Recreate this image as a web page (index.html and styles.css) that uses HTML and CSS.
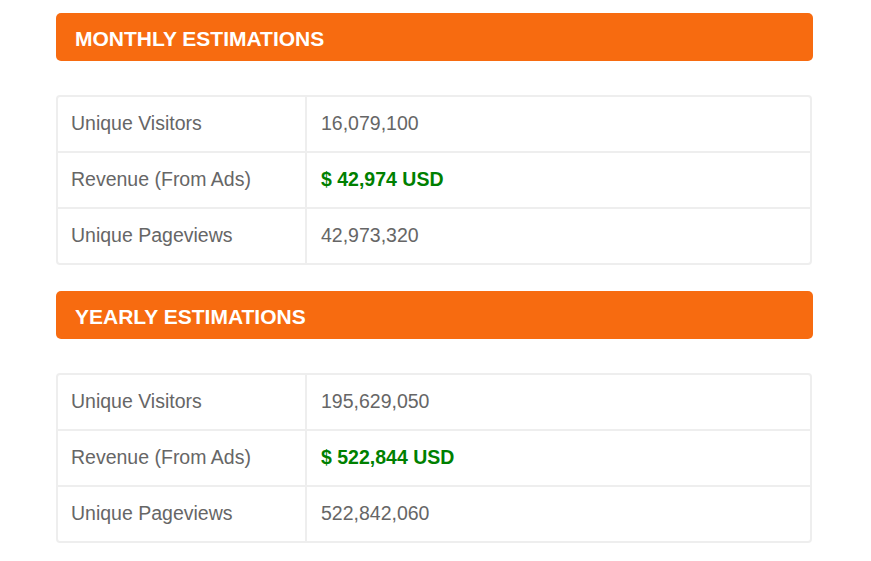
FILE: index.html
```html
<!DOCTYPE html>
<html>
<head>
<meta charset="utf-8">
<link rel="stylesheet" href="styles.css">
</head>
<body>
<div class="wrap">
  <section class="block">
    <h2 class="head">MONTHLY ESTIMATIONS</h2>
    <div class="table">
      <div class="row"><div class="cell label">Unique Visitors</div><div class="cell">16,079,100</div></div>
      <div class="row"><div class="cell label">Revenue (From Ads)</div><div class="cell money">$ 42,974 USD</div></div>
      <div class="row"><div class="cell label">Unique Pageviews</div><div class="cell">42,973,320</div></div>
    </div>
  </section>
  <section class="block">
    <h2 class="head">YEARLY ESTIMATIONS</h2>
    <div class="table">
      <div class="row"><div class="cell label">Unique Visitors</div><div class="cell">195,629,050</div></div>
      <div class="row"><div class="cell label">Revenue (From Ads)</div><div class="cell money">$ 522,844 USD</div></div>
      <div class="row"><div class="cell label">Unique Pageviews</div><div class="cell">522,842,060</div></div>
    </div>
  </section>
</div>
</body>
</html>
```
FILE: styles.css
```css
html, body { margin: 0; padding: 0; background: #fff; }
body { font-family: "Liberation Sans", Arial, sans-serif; }
.wrap {
  padding: 13px 0 0 56px;
  width: 757px;
  display: flex;
  flex-direction: column;
  gap: 26px;
}
.head {
  margin: 0 0 34px 0;
  height: 48px;
  box-sizing: border-box;
  background: #f76b10;
  border-radius: 5px;
  color: #fff;
  font-size: 21px;
  font-weight: bold;
  padding: 4px 0 0 19px;
  display: flex;
  align-items: center;
}
.table {
  border: 2px solid #eeeeee;
  border-radius: 4px;
  width: 756px;
  box-sizing: border-box;
}
.row {
  display: grid;
  grid-template-columns: 249px 1fr;
  height: 54px;
}
.row + .row { border-top: 2px solid #eeeeee; }
.cell {
  display: flex;
  align-items: center;
  padding: 0 0 1px 14px;
  font-size: 19.5px;
  color: #666666;
}
.cell.label { border-right: 2px solid #eeeeee; padding-left: 13px; }
.money { color: #008000; font-weight: bold; }
```
